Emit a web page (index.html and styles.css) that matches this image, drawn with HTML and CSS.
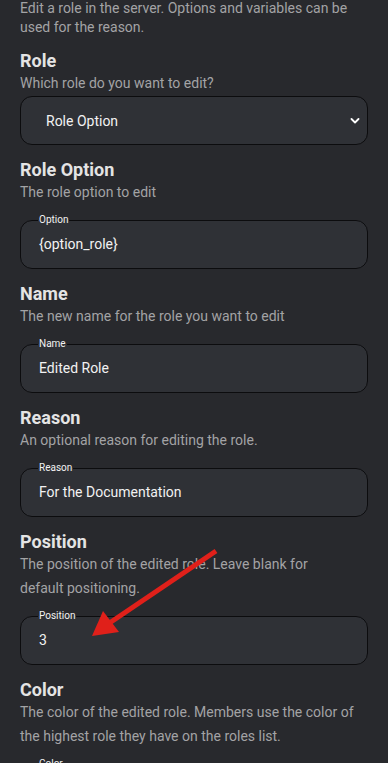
FILE: index.html
```html
<!DOCTYPE html>
<html lang="en">
<head>
    <meta charset="UTF-8">
    <meta name="viewport" content="width=device-width, initial-scale=1.0">
    <title>Edit Role</title>
    <link rel="stylesheet" href="styles.css">
</head>
<body>
    <p class="intro">Edit a role in the server. Options and variables can be used for the reason.</p>

    <!-- Role -->
    <div class="field first">
        <h2>Role</h2>
        <p class="desc">Which role do you want to edit?</p>
        <div class="select">
            <span>Role Option</span>
            <svg width="10" height="6" viewBox="0 0 10 6"><polyline points="1.5,1 5,4.5 8.5,1" fill="none" stroke="#fff" stroke-width="1.8" stroke-linecap="round" stroke-linejoin="round"/></svg>
        </div>
    </div>

    <!-- Role Option -->
    <div class="field">
        <h2>Role Option</h2>
        <p class="desc">The role option to edit</p>
        <fieldset class="box">
            <legend>Option</legend>
            <div class="value">{option_role}</div>
        </fieldset>
    </div>

    <!-- Name -->
    <div class="field">
        <h2>Name</h2>
        <p class="desc">The new name for the role you want to edit</p>
        <fieldset class="box">
            <legend>Name</legend>
            <div class="value">Edited Role</div>
        </fieldset>
    </div>

    <!-- Reason -->
    <div class="field">
        <h2>Reason</h2>
        <p class="desc">An optional reason for editing the role.</p>
        <fieldset class="box">
            <legend>Reason</legend>
            <div class="value">For the Documentation</div>
        </fieldset>
    </div>

    <!-- Position -->
    <div class="field">
        <h2>Position</h2>
        <p class="desc">The position of the edited role. Leave blank for<br>default positioning.</p>
        <fieldset class="box">
            <legend>Position</legend>
            <div class="value">3</div>
        </fieldset>
    </div>

    <!-- Color -->
    <div class="field">
        <h2>Color</h2>
        <p class="desc">The color of the edited role. Members use the color of the highest role they have on the roles list.</p>
        <fieldset class="box">
            <legend>Color</legend>
            <div class="value">#000000</div>
        </fieldset>
    </div>

    <!-- annotation arrow -->
    <svg class="arrow" width="388" height="763" viewBox="0 0 388 763">
        <line x1="216" y1="551" x2="108" y2="624" stroke="#e0201a" stroke-width="5"/>
        <polygon points="92,636 119,632 103,611" fill="#e0201a"/>
    </svg>
</body>
</html>
```

FILE: styles.css
```css
body {
    margin: 0;
    padding: 0 20px;
    background-color: #28292d;
    font-family: Roboto, "Liberation Sans", sans-serif;
    color: #e4e4e4;
    overflow: hidden;
}

.intro {
    margin: -1px 0 0;
    font-size: 14px;
    line-height: 19px;
    color: #a3a3a5;
}

.field {
    margin-top: 15px;
}

.field.first {
    margin-top: 14px;
}

h2 {
    margin: 0;
    font-size: 18px;
    line-height: 20px;
    font-weight: 700;
    color: #e4e4e4;
}

.desc {
    margin: 0;
    font-size: 14px;
    line-height: 24px;
    color: #a3a3a5;
}

.select {
    margin-top: 1px;
    height: 47px;
    display: flex;
    align-items: center;
    justify-content: space-between;
    padding: 0 7px 0 25px;
    background-color: #2f3136;
    border: 1px solid #0c0c0e;
    border-radius: 12px;
    font-size: 14px;
    color: #f2f2f2;
}

.box {
    margin: 10px 0 0;
    padding: 0 18px 0 17px;
    background-color: #2f3136;
    border: 1px solid #0c0c0e;
    border-radius: 12px;
    min-width: 0;
}

.box legend {
    padding: 0 1px;
    font-size: 10px;
    line-height: 12px;
    color: #f2f2f2;
}

.value {
    padding: 8px 1px 14px;
    font-size: 14px;
    line-height: 20px;
    color: #f2f2f2;
}

.arrow {
    position: absolute;
    top: 0;
    left: 0;
    pointer-events: none;
}
```
